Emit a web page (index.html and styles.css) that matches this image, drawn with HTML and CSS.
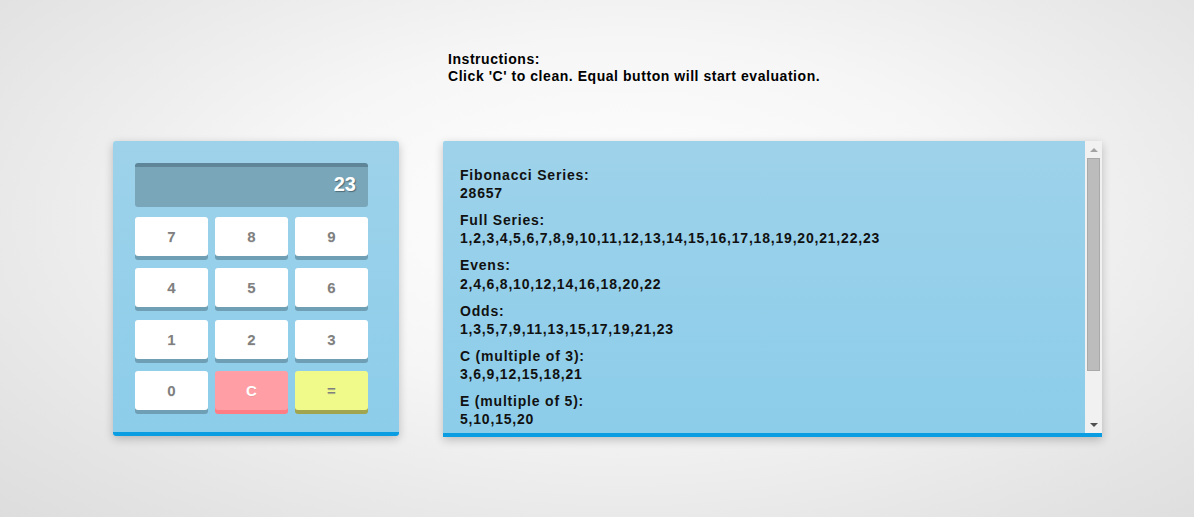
FILE: index.html
```html
<!DOCTYPE html>
<html lang="en">
<head>
<meta charset="utf-8">
<title>Calculator</title>
<link rel="stylesheet" href="styles.css">
</head>
<body>
<div class="page">
  <div class="instructions">
    <div>Instructions:</div>
    <div>Click 'C' to clean. Equal button will start evaluation.</div>
  </div>
  <div class="row">
    <div class="calc">
      <div class="display">23</div>
      <div class="keys">
        <div class="key">7</div>
        <div class="key">8</div>
        <div class="key">9</div>
        <div class="key">4</div>
        <div class="key">5</div>
        <div class="key">6</div>
        <div class="key">1</div>
        <div class="key">2</div>
        <div class="key">3</div>
        <div class="key">0</div>
        <div class="key key-clear">C</div>
        <div class="key key-eval">=</div>
      </div>
    </div>
    <div class="results">
      <div class="results-body">
        <div class="section">
          <div>Fibonacci Series:</div>
          <div>28657</div>
        </div>
        <div class="section">
          <div>Full Series:</div>
          <div>1,2,3,4,5,6,7,8,9,10,11,12,13,14,15,16,17,18,19,20,21,22,23</div>
        </div>
        <div class="section">
          <div>Evens:</div>
          <div>2,4,6,8,10,12,14,16,18,20,22</div>
        </div>
        <div class="section">
          <div>Odds:</div>
          <div>1,3,5,7,9,11,13,15,17,19,21,23</div>
        </div>
        <div class="section">
          <div>C (multiple of 3):</div>
          <div>3,6,9,12,15,18,21</div>
        </div>
        <div class="section">
          <div>E (multiple of 5):</div>
          <div>5,10,15,20</div>
        </div>
      </div>
      <div class="scrollbar">
        <div class="sb-btn"><span class="arrow-up"></span></div>
        <div class="sb-track"><div class="sb-thumb"></div></div>
        <div class="sb-btn"><span class="arrow-down"></span></div>
      </div>
    </div>
  </div>
</div>
</body>
</html>
```

FILE: styles.css
```css
html, body {
  margin: 0;
  height: 100%;
}
body {
  background: radial-gradient(ellipse 75% 85% at 52% 42%, #ffffff 0%, #f6f6f6 40%, #e4e4e4 80%, #dcdcdc 100%);
  font-family: "Liberation Sans", Arial, sans-serif;
  overflow: hidden;
}
.page {
  padding-top: 51px;
}
.instructions {
  margin-left: 448px;
  font-weight: bold;
  font-size: 14px;
  line-height: 17px;
  letter-spacing: 0.55px;
  color: #000;
}
.row {
  display: flex;
  align-items: flex-start;
  gap: 44px;
  margin-top: 56px;
  padding-left: 113px;
}
.calc {
  box-sizing: border-box;
  width: 286px;
  padding: 22px 31px 22px 22px;
  background: linear-gradient(to bottom, #9ed2ea 0%, #8ccdea 100%);
  border-bottom: 4px solid #0a9de2;
  border-radius: 3px;
  box-shadow: 0 3px 10px rgba(0, 0, 0, 0.22);
}
.display {
  box-sizing: border-box;
  height: 44px;
  margin-bottom: 10px;
  padding-right: 12px;
  background: #79a6b9;
  border-top: 4px solid #5f8698;
  border-radius: 3px;
  color: #fff;
  font-weight: bold;
  font-size: 20px;
  line-height: 35px;
  text-align: right;
  text-shadow: 1px 1px 1px rgba(0, 0, 0, 0.35);
}
.keys {
  display: grid;
  grid-template-columns: repeat(3, 1fr);
  column-gap: 7px;
  row-gap: 12.4px;
}
.key {
  height: 39px;
  line-height: 39px;
  background: #fff;
  border-radius: 3px;
  box-shadow: 0 4px 0 #6f9fb5;
  text-align: center;
  font-weight: bold;
  font-size: 15px;
  color: #808080;
  text-shadow: 0 1px 0 rgba(0, 0, 0, 0.08);
}
.key-clear {
  background: #ff9ea5;
  box-shadow: 0 4px 0 #ff7d85;
  color: #fff;
}
.key-eval {
  background: #effa8b;
  box-shadow: 0 4px 0 #a2a54f;
  color: #808080;
}
.results {
  box-sizing: border-box;
  display: flex;
  width: 659px;
  height: 296px;
  background: linear-gradient(to bottom, #9ed2ea 0%, #8ccdea 100%);
  border-bottom: 4px solid #0a9de2;
  border-radius: 2px 2px 0 0;
  box-shadow: 0 3px 10px rgba(0, 0, 0, 0.22);
}
.results-body {
  flex: 1;
  overflow: hidden;
  padding: 25px 17px 0 17px;
  font-weight: bold;
  font-size: 14px;
  line-height: 18.2px;
  letter-spacing: 0.8px;
  color: #111;
}
.section {
  margin-bottom: 8.8px;
}
.scrollbar {
  width: 17px;
  display: flex;
  flex-direction: column;
  background: #f1f1f1;
}
.sb-btn {
  height: 17px;
  display: flex;
  align-items: center;
  justify-content: center;
}
.arrow-up {
  width: 0;
  height: 0;
  border-left: 4px solid transparent;
  border-right: 4px solid transparent;
  border-bottom: 4px solid #a3a3a3;
}
.arrow-down {
  width: 0;
  height: 0;
  border-left: 4px solid transparent;
  border-right: 4px solid transparent;
  border-top: 4px solid #505050;
}
.sb-track {
  flex: 1;
  padding: 0 2px;
}
.sb-thumb {
  box-sizing: border-box;
  height: 213px;
  background: #bcbcbc;
  border: 1px solid #a9a9a9;
}
```
